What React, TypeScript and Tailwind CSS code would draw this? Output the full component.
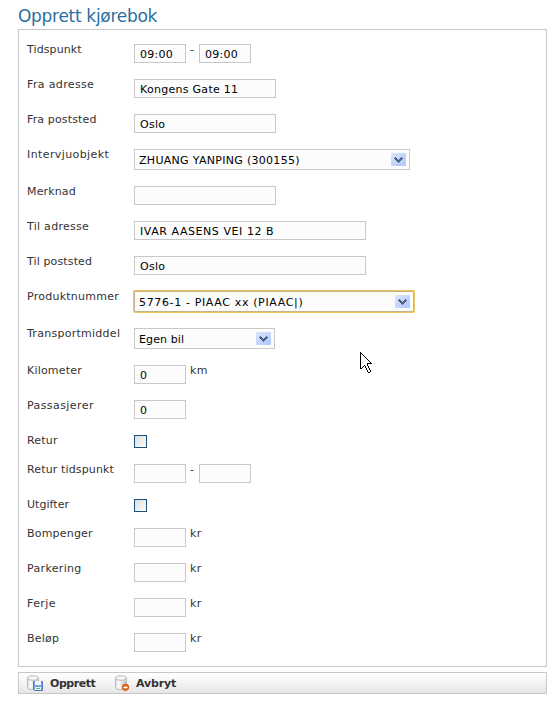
import type { ReactNode } from 'react';

function Row({
  label,
  height = 'h-[35px]',
  tracking = 'tracking-[0.2px]',
  children,
}: {
  label: string;
  height?: string;
  tracking?: string;
  children: ReactNode;
}) {
  return (
    <div className={`flex items-start ${height}`}>
      <span className={`-mt-px w-[107px] shrink-0 whitespace-nowrap leading-[14px] ${tracking}`}>{label}</span>
      <div className="flex items-start">{children}</div>
    </div>
  );
}

function TextField({
  value = '',
  width = 'w-[52px]',
  tracking = 'tracking-[0.25px]',
  label,
}: {
  value?: string;
  width?: string;
  tracking?: string;
  label: string;
}) {
  return (
    <input
      aria-label={label}
      defaultValue={value}
      className={`h-[19px] rounded-none border border-[#c8c8c8] bg-[#fcfcfc] px-[5px] pt-[2px] pb-0 text-[11px] leading-[15px] text-black outline-none ${width} ${tracking}`}
    />
  );
}

function Chevron() {
  return (
    <svg width="15" height="13" viewBox="0 0 15 13">
      <defs>
        <linearGradient id="arrow-face" x1="0" y1="0" x2="1" y2="1">
          <stop offset="0" stopColor="#dce6fd" />
          <stop offset="0.5" stopColor="#c5d5fc" />
          <stop offset="1" stopColor="#afc6fa" />
        </linearGradient>
      </defs>
      <rect width="15" height="13" rx="1" fill="url(#arrow-face)" />
      <path
        fill="#4d6185"
        shapeRendering="crispEdges"
        d="M4 4h1v1h1v1h1v1h1v-1h1v-1h1v-1h1v1h1v1h-1v1h-1v1h-1v1h-1v1h-1v-1h-1v-1h-1v-1h-1v-1h-1v-1h1z"
      />
    </svg>
  );
}

function SelectField({
  value,
  width,
  tracking,
  focused = false,
}: {
  value: string;
  width: string;
  tracking: string;
  focused?: boolean;
}) {
  return (
    <button
      type="button"
      className={`flex h-[21px] items-center justify-between border bg-[#fcfcfc] pr-[3px] pl-[4px] text-[11px] leading-[19px] text-black ${width} ${
        focused ? 'rounded-[1px] border-[#c4b48c] shadow-[0_0_0_1px_#f0c35b]' : 'border-[#c8c8c8]'
      }`}
    >
      <span className={`whitespace-nowrap pt-px ${tracking}`}>{value}</span>
      <Chevron />
    </button>
  );
}

function Unit({ children }: { children: ReactNode }) {
  return <span className="-mt-px ml-[4px] leading-[14px] tracking-[0.5px]">{children}</span>;
}

function Dash() {
  return <span className="-mt-px w-[13px] pl-[4px] leading-[14px]">-</span>;
}

function CheckBox() {
  return <span role="checkbox" aria-checked="false" className="h-[13px] w-[13px] border border-[#1c5180] bg-linear-to-br from-[#dcdcd7] to-white" />;
}

function Database() {
  return (
    <>
      <path d="M.5 3v9.500C.5 13.800 3 14.500 6 14.500s5.500-.7 5.500-2V3z" fill="url(#drum)" stroke="#bcbcbc" />
      <ellipse cx="6" cy="3" rx="5.500" ry="2.300" fill="#f4f4f4" stroke="#bcbcbc" />
    </>
  );
}

function SaveIcon() {
  return (
    <svg width="16" height="16" viewBox="0 0 16 16">
      <defs>
        <linearGradient id="drum">
          <stop offset="0" stopColor="#d8d8d8" />
          <stop offset="0.3" stopColor="#fdfdfd" />
          <stop offset="0.55" stopColor="#e4e4e4" />
          <stop offset="1" stopColor="#c4c4c4" />
        </linearGradient>
      </defs>
      <Database />
      <path d="M6.500 6.500h9v9h-8l-1-1z" fill="#7aa3e4" stroke="#4f7cc4" />
      <path d="M8 6h6v4H8z" fill="#f4f8ff" />
      <path d="M8 12h6v3H8z" fill="#eef4ea" />
      <path d="M9 13.500h4" stroke="#72b94a" />
    </svg>
  );
}

function CancelIcon() {
  return (
    <svg width="16" height="16" viewBox="0 0 16 16">
      <Database />
      <circle cx="10.500" cy="12.300" r="3.200" fill="#e8712d" stroke="#cc5415" />
      <path d="M8.500 12.500h4" stroke="#fff" strokeWidth="1.300" />
    </svg>
  );
}

// One string per pixel row: X is the outline, . is the fill.
const pointerRows = [
  'X',
  'XX',
  'X.X',
  'X..X',
  'X...X',
  'X....X',
  'X.....X',
  'X......X',
  'X.......X',
  'X........X',
  'X.........X',
  'X......XXXXX',
  'X......X',
  'X...X..X',
  'X..X X..X',
  'X.X  X..X',
  'XX    X..X',
  '      X..X',
  '       X..X',
  '       X..X',
  '        XX',
];

function Pointer() {
  return (
    <svg
      className="pointer-events-none absolute top-[352px] left-[360px]"
      width="12"
      height="21"
      viewBox="0 0 12 21"
      shapeRendering="crispEdges"
    >
      {pointerRows.flatMap((row, y) =>
        [...row].map((cell, x) =>
          cell === ' ' ? null : (
            <rect key={`${x}-${y}`} x={x} y={y} width="1" height="1" fill={cell === 'X' ? '#000' : '#fff'} />
          ),
        ),
      )}
    </svg>
  );
}

export default function App() {
  return (
    <main className="relative h-[704px] w-[559px] bg-white pt-[5px] pl-[18px] font-['DejaVu_Sans',Verdana,sans-serif] text-[11px] text-[#333]">
      <h1 className="h-[24px] text-[17px] leading-[22px] tracking-[-0.3px] text-[#2a6f9e]">Opprett kjørebok</h1>
      <form className="h-[638px] w-[529px] border border-[#c8c8c8] pt-[14px] pl-[8px]">
        <Row label="Tidspunkt" tracking="tracking-[0.1px]">
          <TextField label="Fra tid" value="09:00" />
          <Dash />
          <TextField label="Til tid" value="09:00" />
        </Row>
        <Row label="Fra adresse" tracking="tracking-[0.36px]">
          <TextField label="Fra adresse" value="Kongens Gate 11" width="w-[142px]" tracking="tracking-[0.28px]" />
        </Row>
        <Row label="Fra poststed" tracking="tracking-[0.14px]">
          <TextField label="Fra poststed" value="Oslo" width="w-[142px]" />
        </Row>
        <Row label="Intervjuobjekt" height="h-[37px]" tracking="tracking-[0.4px]">
          <SelectField value="ZHUANG YANPING (300155)" width="w-[276px]" tracking="tracking-[0.3px]" />
        </Row>
        <Row label="Merknad" tracking="tracking-[0.15px]"><TextField label="Merknad" width="w-[142px]" /></Row>
        <Row label="Til adresse" tracking="tracking-[0.28px]">
          <TextField label="Til adresse" value="IVAR AASENS VEI 12 B" width="w-[232px]" tracking="tracking-[0.56px]" />
        </Row>
        <Row label="Til poststed" tracking="tracking-[0.13px]">
          <TextField label="Til poststed" value="Oslo" width="w-[232px]" />
        </Row>
        <Row label="Produktnummer" height="h-[37px]" tracking="tracking-[0.25px]">
          <SelectField value="5776-1 - PIAAC xx (PIAAC|)" width="w-[280px]" tracking="tracking-[0.64px]" focused />
        </Row>
        <Row label="Transportmiddel" height="h-[37px]" tracking="tracking-[0.27px]">
          <SelectField value="Egen bil" width="w-[141px]" tracking="tracking-[0.12px]" />
        </Row>
        <Row label="Kilometer"><TextField label="Kilometer" value="0" /><Unit>km</Unit></Row>
        <Row label="Passasjerer" tracking="tracking-[0.42px]"><TextField label="Passasjerer" value="0" /></Row>
        <Row label="Retur" height="h-[29px]"><CheckBox /></Row>
        <Row label="Retur tidspunkt" tracking="tracking-[0.14px]">
          <TextField label="Retur fra" />
          <Dash />
          <TextField label="Retur til" />
        </Row>
        <Row label="Utgifter" height="h-[29px]" tracking="tracking-[0.05px]"><CheckBox /></Row>
        <Row label="Bompenger"><TextField label="Bompenger" /><Unit>kr</Unit></Row>
        <Row label="Parkering" tracking="tracking-[0.33px]"><TextField label="Parkering" /><Unit>kr</Unit></Row>
        <Row label="Ferje" tracking="tracking-[0.4px]"><TextField label="Ferje" /><Unit>kr</Unit></Row>
        <Row label="Beløp"><TextField label="Beløp" /><Unit>kr</Unit></Row>
      </form>
      <div className="mt-[5px] flex h-[22px] w-[529px] items-center border border-[#c8c8c8] bg-linear-to-b from-white to-[#e6e6e6] pl-[8px] font-bold">
        <button type="button" className="flex w-[88px] items-center gap-[7px]">
          <SaveIcon />
          <span className="pt-[2px] tracking-[-0.45px]">Opprett</span>
        </button>
        <button type="button" className="flex items-center gap-[5px]">
          <CancelIcon />
          <span className="pt-[2px] tracking-[-0.15px]">Avbryt</span>
        </button>
      </div>
      <Pointer />
    </main>
  );
}
